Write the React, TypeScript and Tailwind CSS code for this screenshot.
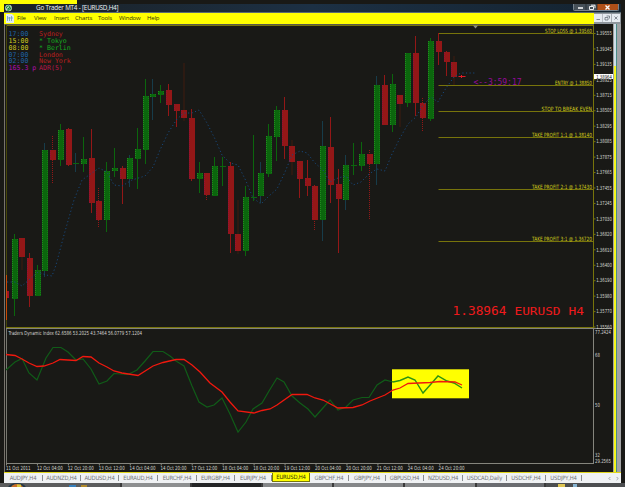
import { ChevronLeft, ChevronRight } from "lucide-react";

// x, high, body top, body bottom, low, colour ("g" up / "r" down), wick style
type Candle = [number, number, number, number, number, "g" | "r", string?];

const GREEN = "#0b660d";
const RED = "#931717";

const candles: Candle[] = [
  [14.5, 234, 239, 299, 316, "g"], [22, 238, 238, 257, 270, "r", "dim"], [29.5, 253, 258, 296, 307, "r"], [37.5, 265, 270, 296, 296, "g"],
  [45, 143, 150, 271, 277, "g", "blue"], [52.5, 136, 150, 160, 183, "r", "dash"], [60.5, 124, 130, 160, 166, "g"], [68.5, 128, 129, 165, 166, "r"],
  [76, 153, 163, 164, 172, "g", "blue"], [83.5, 137, 159, 164, 172, "g"], [91.5, 129, 158, 203, 213, "r"], [99, 188, 201, 220, 228, "r", "dash"],
  [107, 162, 171, 220, 232, "g"], [114.5, 148, 168, 171, 177, "g"], [122.5, 166, 168, 179, 204, "r"], [130, 155, 158, 179, 187, "g", "blue"],
  [137.5, 128, 149, 159, 189, "g"], [145.5, 79, 96, 150, 164, "g"], [153, 79, 94, 97, 120, "g", "blue"], [160.5, 85, 91, 95, 103, "g"],
  [168.5, 84, 90, 105, 116, "r"], [176.5, 104, 104, 111, 127, "r"], [184, 63, 110, 118, 121, "r", "dim"], [191.5, 109, 118, 179, 181, "r"],
  [199.5, 162, 173, 179, 193, "g"], [207, 173, 173, 195, 200, "r", "dash"], [215, 157, 166, 196, 196, "g"], [222.5, 157, 166, 167, 186, "g"],
  [230.5, 162, 166, 234, 253, "r"], [238, 200, 234, 251, 254, "r", "dim"], [246, 186, 197, 251, 256, "g"], [253.5, 135, 197, 198, 201, "g"],
  [261, 162, 173, 196, 203, "g", "blue"], [269, 124, 136, 174, 177, "g"], [276.5, 106, 110, 137, 161, "g"], [284.5, 97, 110, 146, 159, "r"],
  [292, 140, 146, 162, 175, "r", "dim"], [299.5, 161, 161, 179, 198, "r"], [307.5, 160, 178, 186, 196, "r"], [315, 185, 186, 220, 231, "r", "dash"],
  [323, 121, 146, 220, 241, "g", "blue"], [330.5, 117, 147, 185, 203, "r"], [338.5, 169, 184, 199, 253, "r"], [346, 155, 165, 200, 210, "g", "blue"],
  [353.5, 143, 165, 166, 175, "g"], [361.5, 142, 154, 166, 171, "g"], [369.5, 150, 154, 164, 219, "r", "dash"], [377, 76, 85, 164, 185, "g", "blue"],
  [384.5, 75, 85, 125, 125, "r"], [392.5, 74, 84, 125, 132, "g"], [400, 95, 95, 104, 127, "r", "dim"], [408, 53, 53, 103, 107, "g"],
  [415.5, 36, 53, 103, 116, "r"], [423, 98, 103, 118, 132, "r", "dash"], [431, 38, 41, 119, 121, "g"], [438.5, 33, 41, 52, 65, "r"],
  [446.5, 51, 52, 62, 76, "r"], [454, 56, 62, 77, 85, "r", "dim"],
];

const average =
  "7,282 15,282 22,286 30,279 38,272 46,275 52,276 56,265 64,235 74,200 82,180 92,173 99,168 107,172 114,185 122,186 132,180 145,176 153,167 160,150 168,133 177,119 184,113 192,113 199,110 207,123 215,139 222,155 230,163 238,165 246,181 253,198 261,204 269,196 277,189 285,172 292,155 300,151 307,153 315,163 323,170 330,182 338,178 346,176 353,185 361,182 369,174 377,169 385,171 392,154 400,138 408,124 416,117 423,105 431,97 438,102 446,88 454,77 461,73 476,73";
const fastLine =
  "6,370 15,362 22,358.5 29,373 37,380 46,358 53,347.5 61,347.5 68,352 76,360 83,359 91,369 99,384 107,381 114,373.5 128,374.5 137,370 145,361 153,351.5 163,351.5 170,356 176,361 184,366 192,386 199,402 207,407 214,405 222,398 230,414 238,432 246,422 253,409 262,403 269,391 277,378 284,382 292,396 300,403 308,409 315,417 330,400 338,410 346,407 353,400 362,397.5 369,397.5 377,385 385,380 393,382";
const fastEnd = "393,382 400,380.5 408,377 415,380 423,393 431,384 438,376 447,381 454,383 462,388";
const slowLine =
  "6,354.5 15,355.5 22,359 29,363 37,366.5 44,366 53,363 60,359.5 76,360.5 83,356.5 91,357 99,363 107,367 114,371 122,373 138,375.5 153,366 163,362.5 176,359.5 184,359.5 192,365 200,372 210,383 222,392 230,402 238,411 254,413 262,410.5 270,409 277,405 292,394.5 307,394.5 315,398 323,400 338,408 353,407.5 362,405 370,401 385,395 393,390 400,388 408,383.5 430,382.5 440,381.5 455,382 462,385";

const prices = [
  "1.39555", "1.39345", "1.39135", "1.38925", "1.38715", "1.38505", "1.38295", "1.38085", "1.37875", "1.37665",
  "1.37455", "1.37245", "1.37030", "1.36820", "1.36610", "1.36400", "1.36190", "1.35980", "1.35770", "1.35560",
];

const dates = [
  "11 Oct 2011", "12 Oct 04:00", "12 Oct 20:00", "13 Oct 12:00", "14 Oct 04:00", "14 Oct 20:00", "17 Oct 12:00", "18 Oct 04:00",
  "18 Oct 20:00", "19 Oct 12:00", "20 Oct 04:00", "20 Oct 20:00", "21 Oct 12:00", "24 Oct 04:00", "24 Oct 20:00",
];

const levels = [
  { y: 33.5, x: 545, label: "STOP LOSS @ 1.39560" },
  { y: 85.5, x: 555, label: "ENTRY @ 1.38850" },
  { y: 111.5, x: 541.5, label: "STOP TO BREAK EVEN" },
  { y: 137.5, x: 532, label: "TAKE PROFIT 1:1 @ 1.38140" },
  { y: 189.5, x: 532, label: "TAKE PROFIT 2:1 @ 1.37430" },
  { y: 241.5, x: 532, label: "TAKE PROFIT 3:1 @ 1.36720" },
];

const sessions = [
  { time: "17:00", name: "Sydney", a: "#1d62a8", b: "#bb1f1f" },
  { time: "15:00", name: "* Tokyo", a: "#cfc81e", b: "#14ab1f" },
  { time: "08:00", name: "* Berlin", a: "#cfc81e", b: "#14ab1f" },
  { time: "07:00", name: "London", a: "#1d62a8", b: "#bb1f1f" },
  { time: "02:00", name: "New York", a: "#1d62a8", b: "#bb1f1f" },
  { time: "165.3 p", name: "ADR(5)", a: "#b00cb0", b: "#b8164a" },
];

const menu = [
  { label: "File", w: "w-[17px]" }, { label: "View", w: "w-[20px]" }, { label: "Insert", w: "w-[21px]" }, { label: "Charts", w: "w-[23px]" },
  { label: "Tools", w: "w-[21px]" }, { label: "Window", w: "w-[28px]" }, { label: "Help", w: "w-[20px]" },
];

const tabs = [
  { label: "AUDJPY,H4", w: "w-[39px]" }, { label: "AUDNZD,H4", w: "w-[38px]" }, { label: "AUDUSD,H4", w: "w-[38px]" }, { label: "EURAUD,H4", w: "w-[39px]" },
  { label: "EURCHF,H4", w: "w-[39px]" }, { label: "EURGBP,H4", w: "w-[38px]" }, { label: "EURJPY,H4", w: "w-[37px]" }, { label: "EURUSD,H4", w: "w-[38px]" },
  { label: "GBPCHF,H4", w: "w-[39px]" }, { label: "GBPJPY,H4", w: "w-[37px]" }, { label: "GBPUSD,H4", w: "w-[38px]" }, { label: "NZDUSD,H4", w: "w-[39px]" },
  { label: "USDCAD,Daily", w: "w-[44px]" }, { label: "USDCHF,H4", w: "w-[39px]" }, { label: "USDJPY,H4", w: "w-[36px]" },
];

function CandleShape({ c }: { c: Candle }) {
  const [x, high, top, bottom, low, kind, wick] = c;
  const fill = kind === "g" ? GREEN : RED;
  const left = Math.round(x - 3);
  const mid = left + 3;
  const stroke = wick === "dim" ? "#2c1a12" : wick === "blue" ? "#173c4a" : fill;
  return (
    <g shapeRendering="crispEdges">
      <rect x={left + 2} y={high} width={wick === "dim" ? 2 : 1} height={low - high} fill={wick === "dash" ? "none" : stroke} />
      {wick === "dash" && <line x1={mid - 0.5} x2={mid - 0.5} y1={high} y2={low} stroke={RED} strokeDasharray="1 1" />}
      <rect x={left} y={top} width={6} height={Math.max(1, bottom - top)} fill={fill} />
      {bottom - top > 2 && <line x1={left + 0.5} x2={left + 0.5} y1={top} y2={bottom} stroke={kind === "g" ? "#22891f" : "#930f38"} strokeDasharray="1 1" />}
      {bottom - top > 2 && kind === "g" && <line x1={left + 5.5} x2={left + 5.5} y1={top} y2={bottom} stroke="#187a18" strokeDasharray="1 1" />}
    </g>
  );
}

function Chart() {
  return (
    <svg className="block h-[448px] w-[609px] shrink-0 overflow-visible" viewBox="4 24 609 448" fontFamily="'DejaVu Sans Condensed', 'DejaVu Sans', sans-serif">
      <rect x="4" y="24" width="609" height="448" fill="#191916" />
      <g shapeRendering="crispEdges">
        <rect x="4" y="24" width="1" height="448" fill="#77736c" />
        <rect x="5" y="24" width="589" height="1" fill="#58584c" />
        <rect x="6" y="25" width="588" height="1" fill="#77740b" />
        <rect x="6" y="25" width="1" height="303" fill="#47470a" />
        <rect x="593" y="25" width="1" height="303" fill="#77740b" />
        <rect x="6" y="327" width="588" height="1" fill="#77740b" />
        <rect x="6" y="328" width="606" height="1" fill="#84847c" />
        <rect x="6" y="329" width="1" height="135" fill="#77776f" />
        <rect x="593" y="329" width="1" height="135" fill="#85857d" />
        <rect x="6" y="463" width="588" height="1" fill="#85857d" />
        <rect x="6" y="275" width="1" height="45" fill="#c94a04" />
        <rect x="7" y="291" width="2" height="7" fill="#a01226" />
      </g>
      <path d="M473 25.5h5l-2.5 3z" fill="#8c8c84" />

      {levels.map((l) => (
        <g key={l.label}>
          <path d={`M438.5 ${l.y}H593`} stroke="#77740b" />
          <text x={l.x} y={l.y - 0.9} fontSize="5.7" fill="#d2cd1c" textLength={592 - l.x} lengthAdjust="spacingAndGlyphs">{l.label}</text>
        </g>
      ))}
      {candles.map((c) => <CandleShape key={c[0]} c={c} />)}
      <path d="M458.5 76.5h7M461.5 75v3" stroke="#e01a24" />
      <polyline points={average} fill="none" stroke="#17477a" strokeWidth="1" strokeDasharray="1.2 2.4" />

      <g fontFamily="'DejaVu Sans Mono', monospace" fontSize="6.6">
        {sessions.map((s, i) => (
          <g key={s.name}>
            <text x="8.5" y={36.4 + i * 6.75} fill={s.a}>{s.time}</text>
            <text x="39" y={36.4 + i * 6.75} fill={s.b}>{s.name}</text>
          </g>
        ))}
        <text x="473.5" y="85" fontSize="8" fill="#960a9a" textLength="48">{"<--3:59:17"}</text>
        <text x="452.5" y="315.3" fontSize="12" fill="#f0191c" textLength="54" lengthAdjust="spacingAndGlyphs">1.38964</text>
        <text x="514.5" y="315.3" fontSize="11" fill="#f0191c" textLength="46" lengthAdjust="spacingAndGlyphs">EURUSD</text>
        <text x="568.5" y="315.3" fontSize="11" fill="#f0191c" textLength="15.5" lengthAdjust="spacingAndGlyphs">H4</text>
      </g>

      <g fontSize="5.6" fill="#d6d6d0">
        {prices.map((p, i) => (
          <g key={p}>
            <path d={`M594 ${33.5 + i * 15.45}h1.5`} stroke="#77740b" />
            <text x="596.2" y={35.2 + i * 15.45} textLength="15.8" lengthAdjust="spacingAndGlyphs">{p}</text>
          </g>
        ))}
        <rect x="594" y="74" width="19" height="5" fill="#fff" />
        <text x="596.2" y="78.6" fill="#111" textLength="15.8" lengthAdjust="spacingAndGlyphs">1.38964</text>
        <text x="595" y="333.9" textLength="16" lengthAdjust="spacingAndGlyphs">77.2424</text>
        <text x="595" y="357" textLength="4.8" lengthAdjust="spacingAndGlyphs">68</text>
        <text x="595" y="407" textLength="4.8" lengthAdjust="spacingAndGlyphs">50</text>
        <text x="595" y="457" textLength="4.8" lengthAdjust="spacingAndGlyphs">32</text>
        <text x="595" y="462.5" textLength="16" lengthAdjust="spacingAndGlyphs">29.2565</text>
        <text x="8.5" y="335.4" textLength="133.5" lengthAdjust="spacingAndGlyphs">Traders Dynamic Index 62.6586 53.2025 43.7464 56.0779 57.1204</text>
        {dates.map((d, i) => (
          <g key={d}>
            <path d={`M${6.5 + i * 30.95} 464v1.5`} stroke="#85857d" />
            <text x={6 + i * 30.9} y="470" textLength={i ? 26 : 24.5} lengthAdjust="spacingAndGlyphs">{d}</text>
          </g>
        ))}
      </g>

      <rect x="392" y="369.3" width="77" height="29" fill="#ffff00" />
      <polyline points={fastLine} fill="none" stroke="#105c18" strokeWidth="1.2" />
      <polyline points={fastEnd} fill="none" stroke="#2b9311" strokeWidth="1.4" />
      <polyline points={slowLine} fill="none" stroke="#f0180e" strokeWidth="1.3" />
    </svg>
  );
}

function TitleBar() {
  return (
    <div className="flex h-[9px] items-center border-b border-[#5b6b72] bg-linear-to-r from-[#1a2024] via-[#1c3044] via-50% to-[#142330] font-['Open_Sans',sans-serif]">
      <svg className="ml-[1px] h-[8px] w-[7px] shrink-0" viewBox="0 0 8 8">
        <circle cx="4" cy="4" r="3.8" fill="#c9e6cc" />
        <path d="M1.6 4.5a2.5 2.5 0 0 1 4-2.4M6.4 3.6a2.5 2.5 0 0 1-4 2.4M3 4l1 1 2-2.6" fill="none" stroke="#178436" strokeWidth="1.2" />
      </svg>
      <span className="ml-6 text-[6.3px] leading-[8px] font-medium tracking-[-0.2px] whitespace-nowrap text-[#f2f5f7]">Go Trader MT4 - [EURUSD,H4]</span>
      <div className="mr-0.5 ml-auto flex h-[7px] self-start overflow-hidden rounded-b-xs border border-t-0 border-[#77828a]">
        <svg className="h-[7px] w-[44px]" viewBox="0 0 44 7">
          <path d="M0 0h23v7H0z" fill="#465058" />
          <path d="M23 0h21v7H23z" fill="#b05018" />
          <path d="M12 0v7M23 0v7" stroke="#1f262b" strokeWidth=".7" />
          <path d="M4 4h5" stroke="#fff" strokeWidth="1.5" />
          <path d="M15.5 2.5h4v3h-4zM17 1.2h4v3" fill="none" stroke="#fff" strokeWidth=".9" />
          <path d="M31.5 1.5l4 4M35.5 1.5l-4 4" stroke="#fff" strokeWidth="1.3" />
        </svg>
      </div>
    </div>
  );
}

function MenuBar() {
  return (
    <div className="flex h-[11px] items-center bg-[#ffff00] font-['Open_Sans',sans-serif] text-[6px] tracking-[-0.2px] text-[#33330a]">
      <svg className="ml-[2px] h-[9px] w-[8px] shrink-0" viewBox="0 0 8 9">
        <path d="M0 0h6l2 2v7H0z" fill="#e3ebf0" />
        <path d="M1.5 2v5M3.5 3v4M5.5 2v5M1 4h6" stroke="#6f9fc4" strokeWidth=".8" />
      </svg>
      <div className="ml-[3px] flex">
        {menu.map((m) => <span key={m.label} className={`${m.w} whitespace-nowrap`}>{m.label}</span>)}
      </div>
      <svg className="ml-auto h-[11px] w-[27px]" viewBox="0 0 27 11">
        <path d="M0 0h27v11H0z" fill="#8f969c" />
        <path d="M0 1h8.5v8H0zM9 1h8.3v8H9zM18 1h8v8h-8z" fill="#e6ebf0" />
        <path d="M2.5 6.5H6M11 4.5h3v2.5h-3zM12.5 3h3v2.5M20.5 3.5l3 3M23.5 3.5l-3 3" fill="none" stroke="#6b747c" strokeWidth=".8" />
      </svg>
    </div>
  );
}

function Taskbar() {
  return (
    <div className="flex h-1 gap-[2px] overflow-hidden bg-[#3a3a3a]">
      <svg className="h-1 w-[120px] shrink-0" viewBox="0 0 120 4">
        <path d="M0 0h120v4H0z" fill="#5b5c5d" />
        <ellipse cx="17" cy="5" rx="9" ry="5" fill="#223849" />
        <ellipse cx="17" cy="5" rx="6" ry="4" fill="#c9702b" />
        <path d="M17 1.5h4V4h-4z" fill="#d8c83d" />
        <path d="M69 2h7v2h-7z" fill="#3680bd" />
        <path d="M81 2h6v2h-6z" fill="#b08a2c" />
      </svg>
      <div className="w-[68px] bg-[#8d8f90]" />
      <div className="w-[69px] bg-[#242526]" />
      <div className="w-[69px] bg-[#858789]" />
      <div className="w-[69px] bg-[#858789]" />
      <div className="w-[70px] bg-[#858789]" />
      <div className="w-[67px] bg-[#6a6c70]" />
      <div className="flex flex-1 items-end gap-2 bg-[#4c4e50] pl-3">
        <div className="h-[3px] w-[7px] bg-[#dfc653]" />
        <div className="h-[3px] w-1 bg-[#87b4d2]" />
      </div>
    </div>
  );
}

export default function App() {
  return (
    <div className="flex h-[487px] w-[625px] flex-col overflow-hidden bg-[#191916]">
      <div className="h-1 w-[77px] shrink-0 bg-[#ffff00]" />
      <div className="flex h-[479px] shrink-0">
        <div className="w-1 shrink-0">
          <div className="h-2 bg-[#ffff00]" />
        </div>
        <div className="flex w-[617px] flex-col">
          <TitleBar />
          <MenuBar />
          <div className="flex h-[448px]">
            <Chart />
            <div className="w-px bg-[#a3a3a0]" />
            <div className="flex w-[2px] flex-col">
              <div className="h-[42px] bg-[#cfe0ea]" />
              <div className="flex-1 bg-[#f6f61c]" />
            </div>
            <div className="w-px bg-[#4a8c86]" />
            <div className="w-1 bg-[#a2a3a5]" />
          </div>
          <div className="h-px shrink-0 bg-[#e0d51c]" />
          <div className="flex h-[10px] shrink-0 items-center bg-[#f0f2f4] font-['DejaVu_Sans_Condensed','DejaVu_Sans',sans-serif] text-[5.9px] tracking-[-0.2px] text-[#73777a]">
            {tabs.map((t) => (
              <div
                key={t.label}
                className={`${t.w} flex shrink-0 items-center justify-center whitespace-nowrap ${t.label === "EURUSD,H4" ? "h-[9px] self-start border-x border-b border-[#77770a] bg-[#ffff00] text-[#33330a]" : "h-[6px] border-r border-[#8a8e91]"}`}
              >
                {t.label}
              </div>
            ))}
            <div className="mr-px ml-auto flex gap-[3px]">
              <ChevronLeft size={5} strokeWidth={3} />
              <ChevronRight size={5} strokeWidth={3} />
            </div>
          </div>
        </div>
      </div>
      <Taskbar />
    </div>
  );
}
